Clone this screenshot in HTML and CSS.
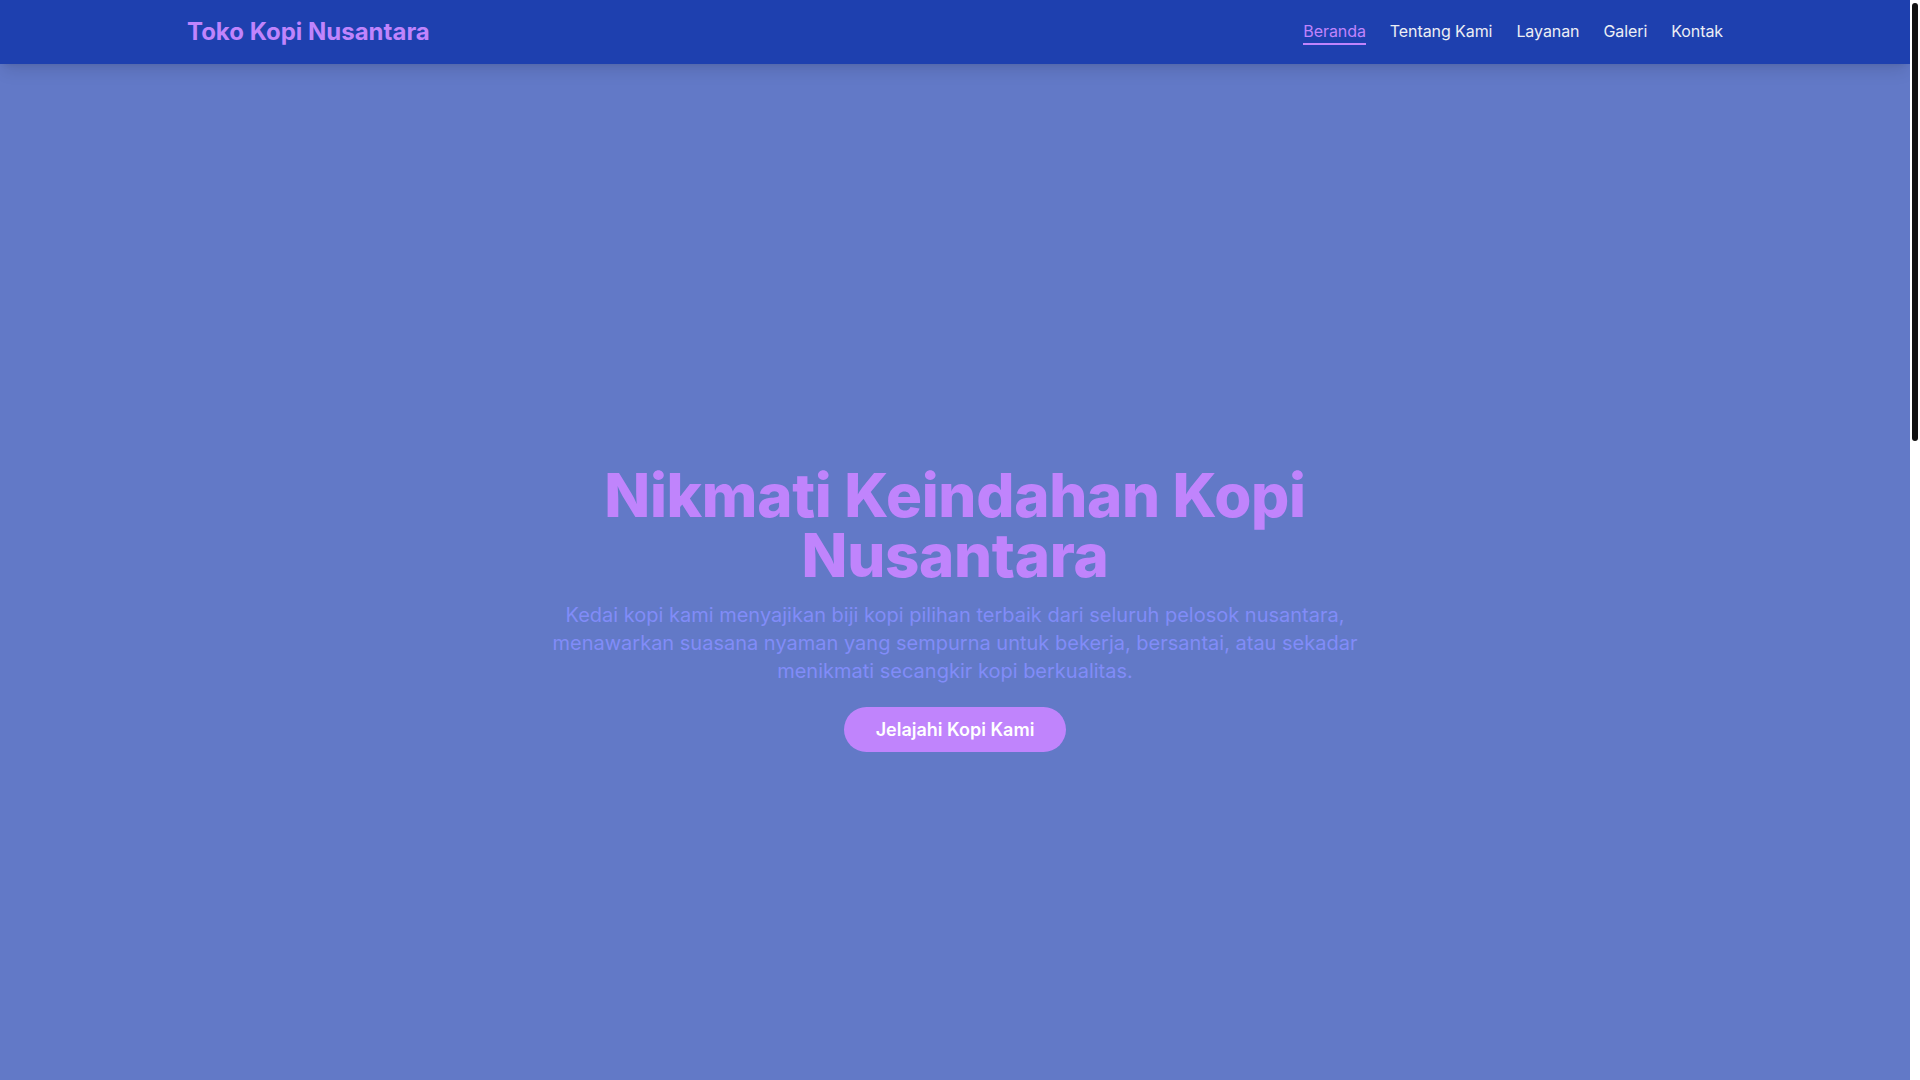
FILE: index.html
```html
<!DOCTYPE html>
<html lang="id">
<head>
<meta charset="utf-8">
<title>Toko Kopi Nusantara</title>
<link rel="stylesheet" href="styles.css">
</head>
<body>
<div class="window">
  <div class="page">
    <header class="navbar">
      <div class="container nav-inner">
        <a class="logo" href="#">Toko Kopi Nusantara</a>
        <nav class="nav-links">
          <a class="nav-link active" href="#">Beranda</a>
          <a class="nav-link" href="#tentang">Tentang Kami</a>
          <a class="nav-link" href="#layanan">Layanan</a>
          <a class="nav-link" href="#galeri">Galeri</a>
          <a class="nav-link" href="#kontak">Kontak</a>
        </nav>
      </div>
    </header>
    <main>
      <section class="hero">
        <div class="hero-content">
          <h1 class="hero-title">Nikmati Keindahan Kopi Nusantara</h1>
          <p class="hero-text">Kedai kopi kami menyajikan biji kopi pilihan terbaik dari seluruh pelosok nusantara, menawarkan suasana nyaman yang sempurna untuk bekerja, bersantai, atau sekadar menikmati secangkir kopi berkualitas.</p>
          <a class="hero-btn" href="#tentang">Jelajahi Kopi Kami</a>
        </div>
      </section>
    </main>
  </div>
  <div class="scrollbar" aria-hidden="true"><div class="scroll-thumb"></div></div>
</div>
</body>
</html>
```
FILE: styles.css
```css
* { box-sizing: border-box; }
html, body {
  margin: 0;
  padding: 0;
  height: 100%;
  overflow: hidden;
}
body {
  font-family: Inter, "Noto Sans", "Liberation Sans", sans-serif;
  background: #ffffff;
  color: #1f2937;
}
.window {
  display: flex;
  height: 100vh;
}
.page {
  flex: 1;
  min-width: 0;
  height: 100vh;
  overflow: hidden;
}
.scrollbar {
  width: 10px;
  flex: none;
  background: #ffffff;
  padding: 3px 2px;
}
.scroll-thumb {
  height: 438px;
  background: #111111;
  border-radius: 3px;
}
a { text-decoration: none; }
.container {
  max-width: 1536px;
  margin: 0 auto;
}
.navbar {
  position: relative;
  z-index: 10;
  background: #1e40af;
  box-shadow: 0 10px 15px -3px rgba(0,0,0,0.1), 0 4px 6px -4px rgba(0,0,0,0.1);
}
.nav-inner {
  height: 64px;
  display: flex;
  align-items: center;
  justify-content: space-between;
}
.logo {
  font-size: 24px;
  line-height: 32px;
  font-weight: 700;
  color: #c084fc;
}
.nav-links {
  display: flex;
  align-items: center;
  gap: 24px;
}
.nav-link {
  font-size: 16px;
  line-height: 24px;
  letter-spacing: -0.08px;
  color: #eceef4;
  border-bottom: 2px solid transparent;
}
.nav-link.active {
  color: #c084fc;
  border-bottom-color: #c084fc;
}
.hero {
  min-height: 100vh;
  padding-top: 8px;
  background: #6279c7;
  display: flex;
  align-items: center;
  justify-content: center;
  text-align: center;
}
.hero-content {
  max-width: 896px;
  padding: 0 16px;
  display: flex;
  flex-direction: column;
  align-items: center;
}
.hero-title {
  margin: 0 0 16px;
  font-size: 60px;
  line-height: 60px;
  font-weight: 800;
  letter-spacing: -0.3px;
  color: #c084fc;
}
.hero-text {
  margin: 0 0 22px;
  font-size: 20px;
  line-height: 28px;
  color: #818cf8;
}
.hero-btn {
  display: inline-block;
  padding: 10px 32px;
  border-radius: 9999px;
  background: #c084fc;
  color: #ffffff;
  font-size: 18px;
  line-height: 25px;
  font-weight: 600;
}
```
